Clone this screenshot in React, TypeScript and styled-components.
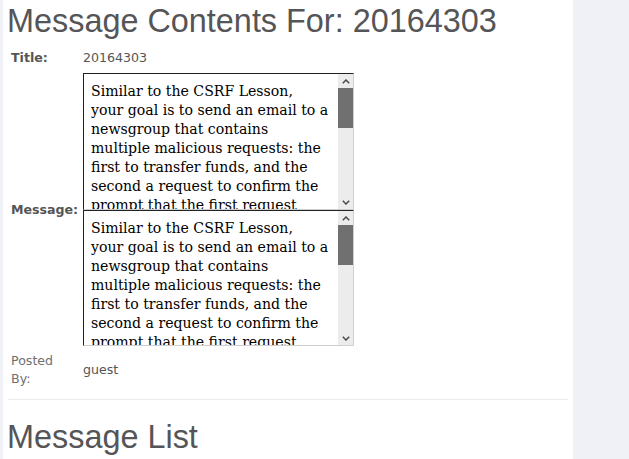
import React from 'react';
import styled, { createGlobalStyle } from 'styled-components';

const GlobalStyle = createGlobalStyle`
  html, body {
    margin: 0;
    padding: 0;
    background: #f0f1f6;
  }
  body {
    font-family: 'DejaVu Sans', sans-serif;
  }
`;

/* ── Layout ── */

const Page = styled.div`
  display: flex;
  min-height: 459px;
  padding-left: 3px;
`;

const Main = styled.main`
  width: 560px;
  background: #fff;
  padding: 0 5px;
`;

const Heading = styled.h1<{ $gap: number }>`
  margin: 0 0 ${({ $gap }) => $gap}px -1px;
  padding-top: 3px;
  font-family: 'Liberation Sans', Arial, sans-serif;
  font-size: 32.4px;
  font-weight: 400;
  line-height: 37px;
  color: #555557;
`;

const DetailGrid = styled.div`
  display: grid;
  grid-template-columns: 72px auto;
  justify-content: start;
  align-items: center;
`;

const Label = styled.div<{ $bold?: boolean }>`
  padding: 3px 4px 3px 3px;
  font-size: 12.6px;
  line-height: 18px;
  white-space: ${({ $bold }) => ($bold ? 'nowrap' : 'normal')};
  font-weight: ${({ $bold }) => ($bold ? 700 : 400)};
  color: ${({ $bold }) => ($bold ? '#555' : '#707070')};
`;

const Value = styled.div`
  padding: 3px;
  font-size: 12.6px;
  line-height: 18px;
  color: #555;
`;

const MessageBox = styled.div<{ $height: number }>`
  display: flex;
  box-sizing: border-box;
  width: 271px;
  height: ${({ $height }) => $height}px;
  border-style: solid;
  border-width: 1px;
  border-color: #222 #cfcfcf #cfcfcf #222;
  background: #fff;
`;

const MessageText = styled.textarea`
  flex: 1;
  min-width: 0;
  margin: 0;
  padding: 8px 8.6px 0 7px;
  border: 0;
  resize: none;
  overflow: hidden;
  outline: none;
  font-family: 'DejaVu Serif', serif;
  font-size: 14.1px;
  line-height: 19px;
  color: #000;
  background: transparent;
`;

const ScrollBar = styled.div`
  width: 15px;
  display: flex;
  flex-direction: column;
  background: #ececec;
`;

const ScrollButton = styled.div`
  height: 14px;
  display: flex;
  align-items: center;
  justify-content: center;
  color: #4a4a4a;
`;

const ScrollTrack = styled.div`
  flex: 1;
`;

const ScrollThumb = styled.div`
  height: 40px;
  background: #707070;
`;

const Divider = styled.hr`
  margin: 8px 0 16px;
  border: 0;
  border-top: 1px solid #ebebeb;
`;

const Sidebar = styled.aside`
  flex: 1;
  background: #f0f1f6;
`;

/* ── Icons ── */

const Chevron = ({ up }: { up?: boolean }) => (
  <svg width="8" height="5" viewBox="0 0 8 5">
    <polyline
      points={up ? '0.8,4.2 4,1 7.2,4.2' : '0.8,0.8 4,4 7.2,0.8'}
      fill="none"
      stroke="currentColor"
      strokeWidth="1.5"
    />
  </svg>
);

/* ── Data ── */

const MESSAGE =
  'Similar to the CSRF Lesson, your goal is to send an email to a newsgroup that contains multiple malicious requests: the first to transfer funds, and the second a request to confirm the prompt that the first request triggered. The URL should point to the CSRF lesson with an extra parameter "transferFunds=4000", and "transferFunds=CONFIRM". You can copy the shortcut from the left hand menu by right clicking on the left hand menu and choosing copy shortcut. Whoever receives this email and happens to be authenticated at that time will have his funds transferred. When you think the attack is successful, refresh the page and you will find the green check on the left hand side menu.';

function MessageField({ height }: { height: number }) {
  return (
    <MessageBox $height={height}>
      <MessageText readOnly defaultValue={MESSAGE} />
      <ScrollBar>
        <ScrollButton><Chevron up /></ScrollButton>
        <ScrollTrack>
          <ScrollThumb />
        </ScrollTrack>
        <ScrollButton><Chevron /></ScrollButton>
      </ScrollBar>
    </MessageBox>
  );
}

/* ── Component ── */

export default function App() {
  return (
    <>
      <GlobalStyle />
      <Page>
        <Main>
          <Heading $gap={6}>Message Contents For: 20164303</Heading>
          <DetailGrid>
            <Label $bold>Title:</Label>
            <Value>20164303</Value>

            <Label $bold>Message:</Label>
            <Value>
              <MessageField height={137} />
              <MessageField height={136} />
            </Value>

            <Label>Posted By:</Label>
            <Value>guest</Value>
          </DetailGrid>
          <Divider />
          <Heading $gap={0}>Message List</Heading>
        </Main>
        <Sidebar />
      </Page>
    </>
  );
}
